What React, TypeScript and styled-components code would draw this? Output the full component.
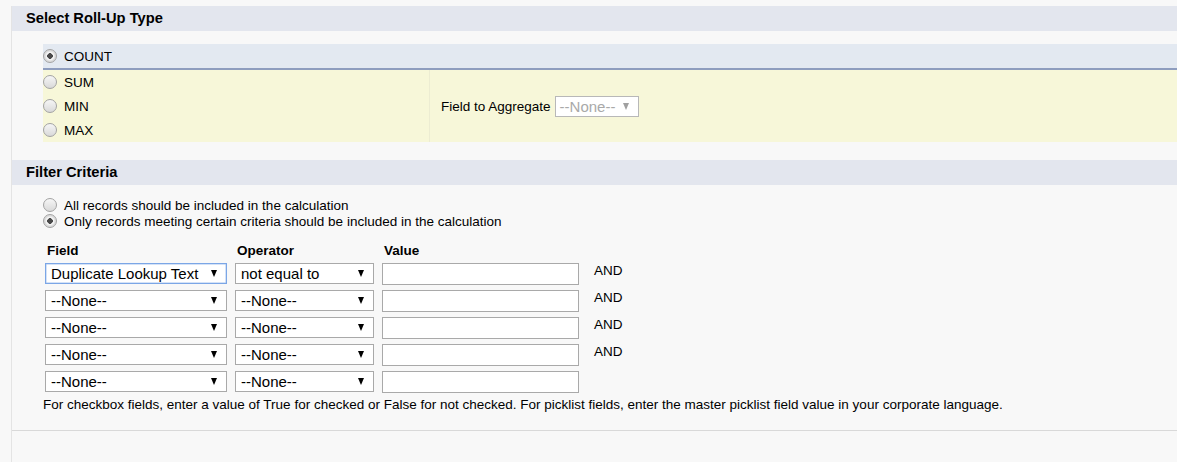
import React from "react";
import styled, { createGlobalStyle, css } from "styled-components";

const GlobalStyle = createGlobalStyle`
  html, body {
    margin: 0;
    padding: 0;
    background: #f8f8f8;
  }
  body {
    font-family: "Liberation Sans", Arial, sans-serif;
    font-size: 13.5px;
    color: #000;
  }
`;

const Page = styled.div`
  width: 1177px;
  height: 462px;
  overflow: hidden;
  padding-top: 6px;
  box-sizing: border-box;
`;

const Main = styled.div`
  margin-left: 11px;
  border-left: 1px solid #e4e4e4;
  height: 100%;
  display: flex;
  flex-direction: column;
`;

const SectionHeader = styled.h3<{ $mt?: number }>`
  margin: ${(p) => p.$mt ?? 0}px 0 0 0;
  height: 25px;
  line-height: 25px;
  padding-left: 14px;
  background: #e3e6ee;
  font-size: 14.7px;
  font-weight: bold;
  color: #000;
`;

const RollUpBody = styled.div`
  padding: 13px 0 0 31px;
`;

const CountRow = styled.div`
  height: 24px;
  background: #e3e9f1;
  border-bottom: 2px solid #8e9dbe;
  display: flex;
  align-items: center;
`;

const YellowBlock = styled.div`
  display: flex;
  background: #f7f7d9;
`;

const OptionsColumn = styled.div`
  width: 386px;
  border-right: 1px solid #ececd2;
`;

const OptionRow = styled.label`
  height: 24px;
  display: flex;
  align-items: center;
`;

const AggregateCell = styled.div`
  flex: 1;
  display: flex;
  align-items: center;
  padding-left: 11px;
  gap: 4px;
`;

const Radio = styled.span<{ $checked?: boolean }>`
  display: inline-block;
  box-sizing: border-box;
  width: 14px;
  height: 14px;
  border-radius: 50%;
  border: 1px solid #a3a3a3;
  background: linear-gradient(180deg, #f6f6f6 0%, #d9d9d9 100%);
  margin-right: 7px;
  flex: none;
  ${(p) =>
    p.$checked &&
    css`
      background: radial-gradient(circle, #4a4a4a 0 2.6px, #f4f4f4 3px 3.8px, #dcdcdc 5px);
    `}
`;

const FilterBody = styled.div`
  padding: 12px 0 18px 31px;
  border-bottom: 1px solid #d9d9d9;
`;

const RadioLine = styled.label`
  height: 16px;
  display: flex;
  align-items: center;
`;

const CriteriaGrid = styled.div`
  display: grid;
  grid-template-columns: 182px 139px 197px auto;
  column-gap: 8px;
  row-gap: 5px;
  margin: 14px 0 0 2px;
  align-items: start;
`;

const ColHead = styled.div`
  font-weight: bold;
  height: 16px;
  line-height: 16px;
  padding-left: 2px;
  margin-bottom: -1px;
`;

const SelectBox = styled.div<{ $w: number; $focused?: boolean; $disabled?: boolean }>`
  box-sizing: border-box;
  width: ${(p) => p.$w}px;
  height: 21px;
  background: #fff;
  border: 1px solid ${(p) => (p.$focused ? "#7ba6e6" : p.$disabled ? "#b8b8b8" : "#a9a9a9")};
  ${(p) => p.$focused && css`box-shadow: inset 0 0 0 0.5px #a9c6ef;`}
  display: flex;
  align-items: center;
  justify-content: space-between;
  padding: 0 9px 0 ${(p) => (p.$disabled ? 4 : 5)}px;
  font-size: 15px;
  color: ${(p) => (p.$disabled ? "#a9a9a9" : "#000")};
  white-space: nowrap;
`;

const Arrow = styled.span<{ $disabled?: boolean }>`
  width: 0;
  height: 0;
  border-left: 3.5px solid transparent;
  border-right: 3.5px solid transparent;
  border-top: 7px solid ${(p) => (p.$disabled ? "#a0a0a0" : "#000")};
  margin-left: 6px;
  flex: none;
`;

const TextInput = styled.input`
  box-sizing: border-box;
  width: 197px;
  height: 22px;
  border: 1px solid #a9a9a9;
  background: #fff;
  margin: 0;
  padding: 0 4px;
  font-family: inherit;
  font-size: 15px;
`;

const AndLabel = styled.div`
  padding: 0 0 0 7px;
  line-height: 15px;
`;

const Note = styled.div`
  margin: 4px 0 0 0;
  line-height: 15px;
`;

const Select: React.FC<{ w: number; value: string; focused?: boolean; disabled?: boolean }> = ({
  w,
  value,
  focused,
  disabled,
}) => (
  <SelectBox $w={w} $focused={focused} $disabled={disabled} role="combobox">
    <span>{value}</span>
    <Arrow $disabled={disabled} />
  </SelectBox>
);

const rows = [
  { field: "Duplicate Lookup Text", op: "not equal to", and: true, focused: true },
  { field: "--None--", op: "--None--", and: true },
  { field: "--None--", op: "--None--", and: true },
  { field: "--None--", op: "--None--", and: true },
  { field: "--None--", op: "--None--", and: false },
];

export default function App() {
  return (
    <>
      <GlobalStyle />
      <Page>
        <Main>
          <SectionHeader>Select Roll-Up Type</SectionHeader>
          <RollUpBody>
            <CountRow>
              <Radio $checked />
              COUNT
            </CountRow>
            <YellowBlock>
              <OptionsColumn>
                <OptionRow>
                  <Radio />
                  SUM
                </OptionRow>
                <OptionRow>
                  <Radio />
                  MIN
                </OptionRow>
                <OptionRow>
                  <Radio />
                  MAX
                </OptionRow>
              </OptionsColumn>
              <AggregateCell>
                Field to Aggregate
                <Select w={84} value="--None--" disabled />
              </AggregateCell>
            </YellowBlock>
          </RollUpBody>

          <SectionHeader $mt={18}>Filter Criteria</SectionHeader>
          <FilterBody>
            <RadioLine>
              <Radio />
              All records should be included in the calculation
            </RadioLine>
            <RadioLine>
              <Radio $checked />
              Only records meeting certain criteria should be included in the calculation
            </RadioLine>
            <CriteriaGrid>
              <ColHead>Field</ColHead>
              <ColHead>Operator</ColHead>
              <ColHead>Value</ColHead>
              <div />
              {rows.map((r, i) => (
                <React.Fragment key={i}>
                  <Select w={182} value={r.field} focused={r.focused} />
                  <Select w={139} value={r.op} />
                  <TextInput type="text" defaultValue="" />
                  <AndLabel>{r.and ? "AND" : ""}</AndLabel>
                </React.Fragment>
              ))}
            </CriteriaGrid>
            <Note>
              For checkbox fields, enter a value of True for checked or False for not checked. For
              picklist fields, enter the master picklist field value in your corporate language.
            </Note>
          </FilterBody>
        </Main>
      </Page>
    </>
  );
}
